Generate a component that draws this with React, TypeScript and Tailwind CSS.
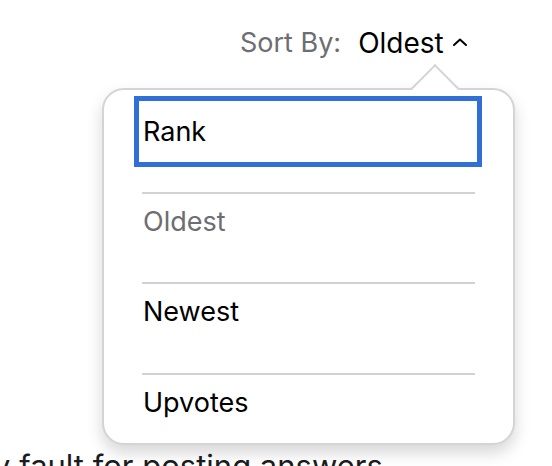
import React from "react";

export default function App() {
  const font = { fontFamily: "Inter, 'Noto Sans', sans-serif" };
  return (
    <div className="relative w-[552px] h-[466px] bg-white overflow-hidden text-black" style={font}>
      <div className="flex items-center pl-[240px] pt-[26px] h-[60px]">
        <span className="text-[27px] leading-[32px] text-[#6d6d72]">Sort By:</span>
        <span className="ml-[17px] text-[28px] leading-[32px] text-black">Oldest</span>
        <svg className="ml-[8px] mt-[-2px]" width="16" height="10" viewBox="0 0 16 10">
          <path d="M2 8 L8 2.5 L14 8" fill="none" stroke="#000" strokeWidth="2" strokeLinecap="round" strokeLinejoin="round" />
        </svg>
      </div>
      <div className="mt-[388px] ml-[-7px] text-[31px] leading-[36px] text-[#1c1c1e] whitespace-nowrap">y fault for posting answers</div>

      <div className="absolute left-[102px] top-[88px] w-[413px] h-[357px] rounded-[22px] border-2 border-[#d4d4d8] bg-white shadow-[0_8px_16px_rgba(0,0,0,0.16)]">
        <div className="absolute left-[314px] top-[-19px] w-[34px] h-[34px] rotate-45 bg-white border-t-2 border-l-2 border-[#d4d4d8]" />
        <div className="relative flex flex-col">
          <div className="mt-[6px] ml-[30px] w-[348px] h-[71px] border-[5px] border-[#2f6fd6] flex items-center pl-[4px]">
            <span className="text-[27px] leading-[32px]">Rank</span>
          </div>
          <div className="mt-[25px] mx-[38px] h-[2px] bg-[#d1d1d6]" />
          <div className="h-[88px] pl-[39px]">
            <div className="mt-[12px] text-[27px] leading-[32px] text-[#6d6d72]">Oldest</div>
          </div>
          <div className="mx-[38px] h-[2px] bg-[#d1d1d6]" />
          <div className="h-[89px] pl-[39px]">
            <div className="mt-[12px] text-[27px] leading-[32px]">Newest</div>
          </div>
          <div className="mx-[38px] h-[2px] bg-[#d1d1d6]" />
          <div className="pl-[39px]">
            <div className="mt-[12px] text-[27px] leading-[32px]">Upvotes</div>
          </div>
        </div>
      </div>
    </div>
  );
}
